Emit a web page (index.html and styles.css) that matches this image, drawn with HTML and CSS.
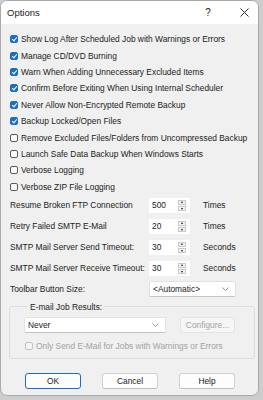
FILE: index.html
```html
<!DOCTYPE html>
<html lang="en">

<head>
    <meta charset="UTF-8">
    <meta name="viewport" content="width=device-width, initial-scale=1.0">
    <title>Options</title>
    <link rel="stylesheet" href="styles.css">
</head>

<body>
    <div class="window">
        <div class="titlebar">
            <span class="title">Options</span>
            <span class="help">?</span>
            <span class="close">
                <svg width="9" height="9" viewBox="0 0 9 9"><path d="M0.5 0.5L8.5 8.5M8.5 0.5L0.5 8.5" stroke="#333" stroke-width="1"/></svg>
            </span>
        </div>
        <div class="content">
            <ul class="checks">
                <li class="check on"><span class="box"></span>Show Log After Scheduled Job with Warnings or Errors</li>
                <li class="check on"><span class="box"></span>Manage CD/DVD Burning</li>
                <li class="check on"><span class="box"></span>Warn When Adding Unnecessary Excluded Items</li>
                <li class="check on"><span class="box"></span>Confirm Before Exiting When Using Internal Scheduler</li>
                <li class="check on"><span class="box"></span>Never Allow Non-Encrypted Remote Backup</li>
                <li class="check on"><span class="box"></span>Backup Locked/Open Files</li>
                <li class="check"><span class="box"></span>Remove Excluded Files/Folders from Uncompressed Backup</li>
                <li class="check"><span class="box"></span>Launch Safe Data Backup When Windows Starts</li>
                <li class="check"><span class="box"></span>Verbose Logging</li>
                <li class="check"><span class="box"></span>Verbose ZIP File Logging</li>
            </ul>

            <div class="field">
                <span class="label">Resume Broken FTP Connection</span>
                <span class="spin"><span class="val">500</span><span class="arrows"><i class="up"></i><i class="down"></i></span></span>
                <span class="unit">Times</span>
            </div>
            <div class="field">
                <span class="label">Retry Failed SMTP E-Mail</span>
                <span class="spin"><span class="val">20</span><span class="arrows"><i class="up"></i><i class="down"></i></span></span>
                <span class="unit">Times</span>
            </div>
            <div class="field">
                <span class="label">SMTP Mail Server Send Timeout:</span>
                <span class="spin"><span class="val">30</span><span class="arrows"><i class="up"></i><i class="down"></i></span></span>
                <span class="unit">Seconds</span>
            </div>
            <div class="field">
                <span class="label">SMTP Mail Server Receive Timeout:</span>
                <span class="spin"><span class="val">30</span><span class="arrows"><i class="up"></i><i class="down"></i></span></span>
                <span class="unit">Seconds</span>
            </div>
            <div class="field">
                <span class="label">Toolbar Button Size:</span>
                <span class="combo toolbar-size">&lt;Automatic&gt;
                    <svg class="chev" width="7" height="4" viewBox="0 0 7 4"><path d="M0.5 0.5L3.5 3.5L6.5 0.5" fill="none" stroke="#777" stroke-width="0.8"/></svg>
                </span>
            </div>

            <fieldset class="group">
                <legend>E-mail Job Results:</legend>
                <div class="group-row">
                    <span class="combo never">Never
                        <svg class="chev" width="7" height="4" viewBox="0 0 7 4"><path d="M0.5 0.5L3.5 3.5L6.5 0.5" fill="none" stroke="#777" stroke-width="0.8"/></svg>
                    </span>
                    <button class="btn disabled">Configure...</button>
                </div>
                <div class="check disabled"><span class="box"></span>Only Send E-Mail for Jobs with Warnings or Errors</div>
            </fieldset>

            <div class="buttons">
                <button class="btn default">OK</button>
                <button class="btn">Cancel</button>
                <button class="btn">Help</button>
            </div>
        </div>
    </div>
</body>

</html>
```

FILE: styles.css
```css
body {
    margin: 0;
    background-color: #cdcdcd;
    font-family: "Liberation Sans", Arial, sans-serif;
    font-size: 8.4px;
    color: #1b1b1b;
}

.window {
    width: 259px;
    height: 396px;
    box-sizing: border-box;
    border: 1px solid #a9a9a9;
    border-radius: 7px;
    overflow: hidden;
    background-color: #f0f0f0;
}

.titlebar {
    height: 23px;
    display: flex;
    align-items: center;
    padding-left: 6px;
    background-color: #fff;
    font-size: 9.5px;
}

.title {
    flex: 1;
}

.help {
    width: 44px;
    text-align: center;
    font-size: 10px;
}

.close {
    width: 28px;
    display: flex;
    justify-content: center;
}

.content {
    padding: 7px 0 0 9px;
}

.checks {
    list-style: none;
    margin: 0;
    padding: 0;
}

.check {
    height: 16.4px;
    display: flex;
    align-items: center;
    gap: 3px;
    white-space: nowrap;
}

.box {
    position: relative;
    flex-shrink: 0;
    width: 8px;
    height: 8px;
    box-sizing: border-box;
    border: 1px solid #5c5c5c;
    border-radius: 2px;
    background-color: #fafafa;
}

.check.on .box {
    background-color: #1a6fc4;
    border-color: #1a6fc4;
}

.check.on .box::after {
    content: "";
    position: absolute;
    left: 2px;
    top: 0px;
    width: 2px;
    height: 4px;
    border-right: 1px solid #fff;
    border-bottom: 1px solid #fff;
    transform: rotate(40deg);
}

.field {
    height: 21px;
    display: flex;
    align-items: center;
    white-space: nowrap;
}

.label {
    width: 139px;
    flex-shrink: 0;
}

.spin {
    width: 41px;
    height: 15px;
    box-sizing: border-box;
    display: flex;
    align-items: center;
    justify-content: space-between;
    padding: 0 4px 0 3px;
    background-color: #fff;
}

.arrows {
    display: flex;
    flex-direction: column;
    gap: 1px;
}

.arrows i {
    display: block;
    width: 8px;
    height: 5px;
    box-sizing: border-box;
    border: 1px solid #c9c9c9;
    background-color: #f2f2f2;
    position: relative;
}

.arrows i::after {
    content: "";
    position: absolute;
    left: 2px;
    border-left: 1.5px solid transparent;
    border-right: 1.5px solid transparent;
}

.arrows .up::after {
    top: 0px;
    border-bottom: 2px solid #222;
}

.arrows .down::after {
    top: 1px;
    border-top: 2px solid #222;
}

.unit {
    margin-left: 13px;
}

.combo {
    height: 16px;
    box-sizing: border-box;
    display: flex;
    align-items: center;
    justify-content: space-between;
    padding: 0 6px 0 3px;
    background-color: #fff;
    border: 1px solid #e2e2e2;
    border-bottom-color: #c4c4c4;
    border-radius: 2px;
}

.toolbar-size {
    width: 87px;
}

.group {
    width: 246px;
    box-sizing: border-box;
    margin: 1px 0 0 -1px;
    padding: 4px 0 4px 14px;
    border: 1px solid #dcdcdc;
    border-radius: 3px;
}

.group legend {
    padding: 0 2px;
    margin-left: 4px;
    line-height: 12px;
}

.group-row {
    display: flex;
    gap: 14px;
}

.never {
    width: 142px;
}

.group .check {
    margin-top: 5px;
    height: 16px;
    margin-left: 1px;
}

.check.disabled {
    color: #a3a3a3;
}

.check.disabled .box {
    border-color: #c4c4c4;
    background-color: #f4f4f4;
}

.btn {
    width: 56px;
    height: 16px;
    padding: 0;
    margin: 0;
    font-family: inherit;
    font-size: 8.4px;
    color: #1b1b1b;
    background-color: #fdfdfd;
    border: 1px solid #d0d0d0;
    border-bottom-color: #bdbdbd;
    border-radius: 3px;
}

.btn.disabled {
    width: 55px;
    color: #a3a3a3;
    background-color: #f6f6f6;
    border-color: #e3e3e3;
}

.btn.default {
    border: 1px solid #1a6fc4;
}

.buttons {
    display: flex;
    gap: 21px;
    margin-top: 14px;
    padding-left: 15px;
}
```
